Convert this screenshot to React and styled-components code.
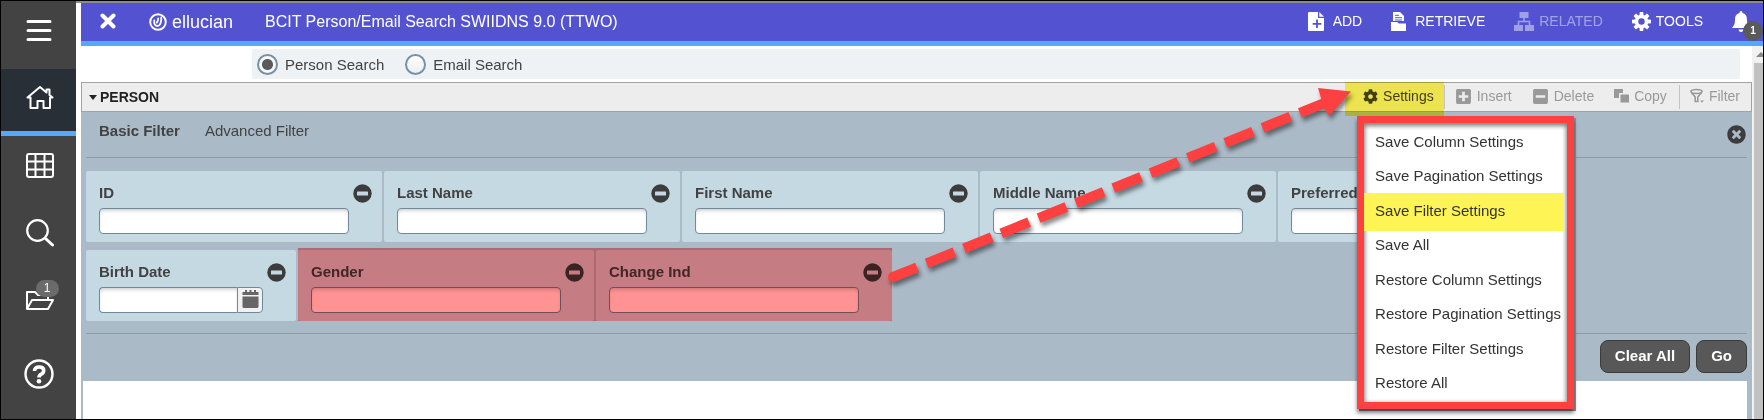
import React from "react";
import styled, { createGlobalStyle, css } from "styled-components";
import { FaCog, FaPlusSquare, FaMinusSquare, FaTimesCircle } from "react-icons/fa";

const GlobalStyle = createGlobalStyle`
  *, *::before, *::after { box-sizing: border-box; }
  body {
    margin: 0;
    background: #fff;
    font-family: "Liberation Sans", Arial, sans-serif;
    font-size: 15px;
    color: #424242;
  }
  button, input { font: inherit; color: inherit; }
  button { border: 0; padding: 0; background: none; cursor: pointer; }
  svg { display: block; flex: none; }
`;

const Frame = styled.div`
  display: flex;
  min-height: 100vh;
  border: 1px solid #000;
`;

/* ---------- side navigation ---------- */

const SideNav = styled.nav`
  display: flex;
  flex-direction: column;
  flex: none;
  width: 75px;
  background: #434343;
  color: #fff;
`;

const NavButton = styled.button`
  display: flex;
  justify-content: center;
  align-items: flex-start;
  height: 67px;
  padding-top: 16px;
  padding-right: 6px;
  padding-left: 8px;
  ${(p) =>
    p.$active &&
    css`
      background: #282f36;
      border-bottom: 5px solid #54a9ff;
    `}
  ${(p) => p.$first && css`height: 68px; padding-left: 6px;`}
  ${(p) => p.$last && css`margin-top: 6px; padding-left: 6px;`}
`;

const NavIcon = styled.span`
  position: relative;
  display: block;
`;

const NavBadge = styled.span`
  position: absolute;
  top: -6px;
  left: 10px;
  width: 23px;
  height: 17px;
  border-radius: 9px;
  background: #6b6b6b;
  font-size: 12px;
  line-height: 17px;
  text-align: center;
`;

/* ---------- header ---------- */

const Main = styled.main`
  flex: 1;
  min-width: 0;
  display: flex;
  flex-direction: column;
  border-top: 2px solid #8c8a8c;
`;

const Inset = styled.div`
  flex: 1;
  display: flex;
  flex-direction: column;
  margin-left: 5px;
`;

const Header = styled.header`
  display: flex;
  align-items: center;
  height: 43px;
  padding-left: 18px;
  border-bottom: 5px solid #54a9ff;
  background: #5353d1;
  color: #fff;
`;

const Logo = styled.div`
  display: flex;
  align-items: center;
  gap: 5px;
  width: 116px;
  margin-left: 32px;
  font-size: 18px;
`;

const Title = styled.h1`
  flex: 1;
  margin: 0;
  padding-bottom: 1px;
  font-size: 16px;
  font-weight: 400;
  white-space: nowrap;
`;

const HeaderActions = styled.div`
  display: flex;
  align-items: center;
  height: 38px;
`;

const HeaderButton = styled.button`
  display: flex;
  align-items: center;
  gap: ${(p) => p.$gap || 5}px;
  margin-right: 29px;
  padding-bottom: 2px;
  font-size: 14px;
  opacity: ${(p) => (p.disabled ? 0.45 : 1)};
`;

const BellButton = styled.button`
  position: relative;
  display: flex;
  align-items: flex-start;
  width: 31px;
  height: 38px;
  padding-top: 8px;
`;

const BellBadge = styled.span`
  position: absolute;
  right: 0;
  bottom: 0;
  width: 20px;
  height: 20px;
  border-radius: 10px;
  background: #5a5a5a;
  font-size: 10px;
  font-weight: 700;
  line-height: 20px;
  text-align: center;
`;

/* ---------- content ---------- */

const Body = styled.div`
  flex: 1;
  display: flex;
`;

const Content = styled.div`
  flex: 1;
  min-width: 0;
  display: flex;
  flex-direction: column;
`;

const SearchMode = styled.div`
  display: flex;
  align-items: center;
  gap: 21px;
  height: 30px;
  margin: 3px 12px 3px 171px;
  padding-left: 5px;
  background: #eff2f5;
`;

const RadioLabel = styled.label`
  display: flex;
  align-items: center;
  gap: 7px;
`;

const Radio = styled.input`
  appearance: none;
  width: 21px;
  height: 21px;
  margin: 0;
  border: 2px solid #7690a5;
  border-radius: 50%;
  background: linear-gradient(#fff, #eee);
  &:checked {
    background: radial-gradient(circle, #5a5a5a 5px, #f8f8f8 6px);
  }
`;

const Panel = styled.section`
  position: relative;
  flex: 1;
  display: flex;
  flex-direction: column;
  background: #abbac7;
`;

const PanelBar = styled.div`
  display: flex;
  align-items: center;
  height: 30px;
  border: 1px solid #a2a2a2;
  background: #ededed;
`;

const PanelTitle = styled.h2`
  flex: 1;
  display: flex;
  align-items: center;
  gap: 3px;
  margin: 0;
  padding-left: 7px;
  font-size: 14px;
  color: #222;
`;

const ToolSlot = styled.div`
  position: relative;
  display: flex;
  align-items: center;
  height: 28px;
  padding: 0 10px 0 18px;
  &::after {
    content: "";
    position: absolute;
    z-index: 1;
    inset: -1px 0 -5px 0;
    background: #fff455;
    mix-blend-mode: multiply;
    pointer-events: none;
  }
`;

const ToolButton = styled.button`
  display: flex;
  align-items: center;
  gap: 5px;
  margin-right: ${(p) => p.$after || 0}px;
  padding-bottom: 2px;
  font-size: 14px;
  color: ${(p) => (p.disabled ? "#999" : "#424242")};
`;

const Divider = styled.span`
  width: 1px;
  height: 24px;
  margin-right: 10px;
  background: #c4c4c4;
`;

const Menu = styled.ul`
  position: absolute;
  z-index: 3;
  top: 33px;
  left: 12px;
  display: flex;
  flex-direction: column;
  width: 217px;
  height: 293px;
  margin: 0;
  padding: 1px 3px 2px 0;
  list-style: none;
  border: 7px solid #ff4040;
  background: #fff;
  box-shadow: inset 0 2px 4px 1px rgba(0, 0, 0, 0.5), 0 4px 4px rgba(0, 0, 0, 0.5), 2px 2px 0 #8b9298;
`;

const MenuItem = styled.li`
  flex: 1;
  display: flex;
  ${(p) =>
    p.$marked &&
    css`
      background: #fff455;
      box-shadow: 0 3px 0 #fff455;
    `}
`;

const MenuButton = styled.button`
  flex: 1;
  padding-left: 11px;
  text-align: left;
  white-space: nowrap;
  color: #333;
`;

const Filter = styled.div`
  padding: 0 5px;
`;

const FilterTabs = styled.div`
  display: flex;
  align-items: center;
  gap: 25px;
  height: 46px;
  padding: 0 1px 8px 13px;
  border-bottom: 1px solid #8f9ba5;
`;

const FilterTab = styled.button`
  font-weight: ${(p) => (p.$active ? 700 : 400)};
`;

const CloseButton = styled.button`
  margin-left: auto;
  padding-top: 8px;
  color: #3c3c3c;
`;

const Fields = styled.div`
  display: flex;
  flex-wrap: wrap;
  gap: 8px 2px;
  padding: 13px 0 12px;
  border-bottom: 1px solid #8f9ba5;
`;

const MarkedFields = styled.div`
  position: relative;
  display: flex;
  gap: 2px;
  &::after {
    content: "";
    position: absolute;
    inset: -2px 0 0 0;
    background: #ff9292;
    mix-blend-mode: multiply;
    pointer-events: none;
  }
`;

const Card = styled.div`
  width: ${(p) => (p.$narrow ? 210 : 296)}px;
  height: 71px;
  padding: 11px 10px 0 13px;
  border-radius: 2px;
  background: #c5d9e3;
`;

const CardHead = styled.div`
  display: flex;
  justify-content: space-between;
  align-items: center;
  height: 26px;
  padding-bottom: 6px;
`;

const CardLabel = styled.label`
  font-weight: 700;
`;

const RemoveButton = styled.button`
  padding-top: 2px;
`;

const TextBox = styled.input`
  display: block;
  width: 250px;
  height: 26px;
  padding: 0 6px;
  border: 1px solid #71899d;
  border-radius: 4px;
  background: #fff;
  box-shadow: inset 0 3px 4px -2px rgba(0, 0, 0, 0.25);
`;

const DateBox = styled.div`
  display: flex;
  ${TextBox} {
    width: 138px;
    border-right: 0;
    border-radius: 4px 0 0 4px;
  }
`;

const CalendarButton = styled.button`
  display: flex;
  justify-content: center;
  align-items: flex-start;
  width: 26px;
  height: 26px;
  padding-top: 2px;
  border: 1px solid #71899d;
  border-radius: 0 4px 4px 0;
  background: #f1f1f1;
`;

const FilterActions = styled.div`
  display: flex;
  justify-content: flex-end;
  gap: 6px;
  padding: 6px 0 8px;
`;

const ActionButton = styled.button`
  height: 33px;
  padding: 0 14px 2px;
  border: 1px solid #3c3c3c;
  border-radius: 8px;
  background: #585858;
  color: #fff;
  font-weight: 700;
`;

const Results = styled.div`
  flex: 1;
  min-height: 38px;
  margin: 0 5px 0 2px;
  background: #fff;
`;

const ScrollTrack = styled.div`
  display: flex;
  flex-direction: column;
  align-items: flex-end;
  width: 11px;
  background: #f1f1f1;
`;

const ScrollThumb = styled.div`
  flex: 1;
  width: 9px;
  margin-top: 6px;
  background: #c1c1c1;
`;

const Arrow = styled.svg`
  position: absolute;
  z-index: 2;
  top: 0;
  left: 800px;
  overflow: visible;
  pointer-events: none;
  filter: drop-shadow(2px 4px 2px rgba(0, 0, 0, 0.45));
`;

/* ---------- drawings ---------- */

const MenuGlyph = () => (
  <svg width="26" height="24" viewBox="0 0 26 24" stroke="#fff" strokeWidth="3" strokeLinecap="round">
    <path d="M2 4.500H24M2 13.500H24M2 22.500H24" />
  </svg>
);

const HomeGlyph = () => (
  <svg width="28" height="26" viewBox="0 0 28 26" fill="none" stroke="#fff" strokeWidth="2" strokeLinejoin="round" strokeLinecap="round">
    <path d="M1.500 12.500L14 2L20.500 7.500V4.500H23.500V10L26.500 12.500H24V23H17.500V16H11.500V23H4.500V12.500Z" />
  </svg>
);

const GridGlyph = () => (
  <svg width="28" height="27" viewBox="0 0 28 27" fill="none" stroke="#fff" strokeWidth="2">
    <rect x="1" y="2" width="26" height="23" rx="2" />
    <path d="M9.500 2V25M18.500 2V25M1 9.500H27M1 17.500H27" />
  </svg>
);

const SearchGlyph = () => (
  <svg width="28" height="28" viewBox="0 0 28 28" fill="none" stroke="#fff" strokeLinecap="round">
    <circle cx="11.500" cy="11.500" r="10.300" strokeWidth="2.200" />
    <path d="M19.500 19.500L26.500 26" strokeWidth="3" />
  </svg>
);

const FolderGlyph = () => (
  <svg width="28" height="26" viewBox="0 0 28 26" fill="none" stroke="#fff" strokeWidth="2" strokeLinejoin="round">
    <path d="M1 23V6H9L12 9H22V14M1 23H22L27 14H6Z" />
  </svg>
);

const HelpGlyph = () => (
  <svg width="30" height="30" viewBox="0 0 30 30" fill="none" stroke="#fff">
    <circle cx="15" cy="15" r="13.500" strokeWidth="2.400" />
    <path d="M10.500 12Q10.500 8 15.200 8Q19.700 8 19.700 11.500Q19.700 14 17 15.300Q15 16.300 15 18.500" strokeWidth="3.600" />
    <circle cx="15" cy="22.300" r="2.300" fill="#fff" stroke="none" />
  </svg>
);

const CloseGlyph = () => (
  <svg width="18" height="18" viewBox="0 0 18 18" stroke="#fff" strokeWidth="4" strokeLinecap="round">
    <path d="M3.500 2.500L14.500 13.500M14.500 2.500L3.500 13.500" />
  </svg>
);

const LogoGlyph = () => (
  <svg width="18" height="18" viewBox="0 0 18 18" fill="none" stroke="#fff" strokeLinecap="round">
    <circle cx="9" cy="9" r="7.800" strokeWidth="1.900" />
    <path d="M5.300 7.500C4.800 10.500 6 13 8.300 13C11.300 13 12.500 8.500 12.300 4.500M9.200 5.500C9.200 7 8.800 8.500 7.800 9.500" strokeWidth="1.800" />
  </svg>
);

const AddGlyph = () => (
  <svg width="16" height="19" viewBox="0 0 16 19">
    <path d="M1 0H10V6H16V18Q16 19 15 19H1Q0 19 0 18V1Q0 0 1 0ZM11.300 0L16 4.700H11.300Z" fill="#fff" />
    <path d="M9 7.500V16M4.700 11.800H13.300" stroke="#5353d1" strokeWidth="1.800" />
  </svg>
);

const RetrieveGlyph = () => (
  <svg width="15" height="19" viewBox="0 0 15 19">
    <path d="M2 0H9L13 4V9H2Z" fill="#fff" />
    <path d="M4 3.300H8M4 5.700H11M4 8H11" stroke="#5353d1" strokeWidth="1" />
    <path d="M0 10H6L8 11.500H15V19H0Z" fill="#fff" />
  </svg>
);

const RelatedGlyph = () => (
  <svg width="20" height="19" viewBox="0 0 20 19" fill="#fff">
    <path d="M5.500 0H14.500V6H5.500ZM0 13H9V19H0ZM11 13H20V19H11Z" />
    <path d="M10 6V9.500M4.500 13V9.500H15.500V13" fill="none" stroke="#fff" strokeWidth="1.600" />
  </svg>
);

const ToolsGlyph = () => (
  <svg width="19" height="19" viewBox="-10 -10 20 20" fill="#fff">
    {[0, 45, 90, 135].map((a) => (
      <path key={a} d="M-1.800 -10H1.800L2.300 -5H-2.300ZM-1.800 10H1.800L2.300 5H-2.300Z" transform={`rotate(${a})`} />
    ))}
    <circle r="5.200" fill="none" stroke="#fff" strokeWidth="3.600" />
  </svg>
);

const BellGlyph = () => (
  <svg width="18" height="22" viewBox="0 0 18 22" fill="#fff">
    <path d="M9 0Q10.500 0 10.500 2C14 3 15 5.500 15 9C15 13.500 16.500 15 18 17H0C1.500 15 3 13.500 3 9C3 5.500 4 3 7.500 2Q7.500 0 9 0Z" />
    <path d="M6.500 18.500H11.500Q11 21 9 21Q7 21 6.500 18.500Z" />
  </svg>
);

const CaretGlyph = () => (
  <svg width="8" height="5" viewBox="0 0 8 5" fill="#222">
    <path d="M0 0H8L4 5Z" />
  </svg>
);

const CopyGlyph = () => (
  <svg width="15" height="14" viewBox="0 0 15 14" fill="#999">
    <path d="M0 0H9V4H5V9H0Z" />
    <rect x="6.500" y="5.500" width="8.500" height="8" />
  </svg>
);

const FunnelGlyph = () => (
  <svg width="14" height="16" viewBox="0 0 14 16" fill="none" stroke="#999">
    <ellipse cx="6.500" cy="3.500" rx="5.500" ry="2" strokeWidth="1.600" />
    <path d="M1.500 4.500L5.200 9V13.500H7.800V9L11.500 4.500" strokeWidth="1.600" />
    <path d="M10 12.500H14L12 14.800Z" fill="#999" stroke="none" />
  </svg>
);

const MinusGlyph = () => (
  <svg width="19" height="19" viewBox="0 0 19 19">
    <circle cx="9.500" cy="9.500" r="9.200" fill="#3c3c3c" />
    <rect x="4" y="7.500" width="11" height="4" rx="0.500" fill="#c5d9e3" />
  </svg>
);

const CalendarGlyph = () => (
  <svg width="17" height="18" viewBox="0 0 17 18" fill="#666">
    <path d="M0.500 2H3V0H5V2H7.500V0H9.500V2H12V0H14V2H16.500V5H0.500ZM0.500 6.500H16.500V16.500Q16.500 18 15 18H2Q0.500 18 0.500 16.500Z" />
  </svg>
);

const ScrollUpGlyph = () => (
  <svg width="9" height="11" viewBox="0 0 9 11" fill="#888">
    <path d="M2 11L7 6L9 8V11Z" />
  </svg>
);

/* ---------- composed parts ---------- */

function Field({ id, label, date }) {
  return (
    <Card $narrow={date}>
      <CardHead>
        <CardLabel htmlFor={id}>{label}</CardLabel>
        <RemoveButton type="button" aria-label={`Remove ${label}`}>
          <MinusGlyph />
        </RemoveButton>
      </CardHead>
      {date ? (
        <DateBox>
          <TextBox id={id} type="text" />
          <CalendarButton type="button" aria-label="Pick a date">
            <CalendarGlyph />
          </CalendarButton>
        </DateBox>
      ) : (
        <TextBox id={id} type="text" />
      )}
    </Card>
  );
}

const MENU = [
  "Save Column Settings",
  "Save Pagination Settings",
  "Save Filter Settings",
  "Save All",
  "Restore Column Settings",
  "Restore Pagination Settings",
  "Restore Filter Settings",
  "Restore All",
];

export default function App() {
  return (
    <>
      <GlobalStyle />
      <Frame>
        <SideNav>
          <NavButton $first aria-label="Menu"><MenuGlyph /></NavButton>
          <NavButton $active aria-label="Home"><HomeGlyph /></NavButton>
          <NavButton aria-label="Applications"><GridGlyph /></NavButton>
          <NavButton aria-label="Search"><SearchGlyph /></NavButton>
          <NavButton aria-label="Recently opened">
            <NavIcon>
              <FolderGlyph />
              <NavBadge>1</NavBadge>
            </NavIcon>
          </NavButton>
          <NavButton $last aria-label="Help"><HelpGlyph /></NavButton>
        </SideNav>

        <Main>
          <Inset>
            <Header>
              <button type="button" aria-label="Close"><CloseGlyph /></button>
              <Logo><LogoGlyph />ellucian</Logo>
              <Title>BCIT Person/Email Search SWIIDNS 9.0 (TTWO)</Title>
              <HeaderActions>
                <HeaderButton $gap={9}><AddGlyph />ADD</HeaderButton>
                <HeaderButton $gap={9}><RetrieveGlyph />RETRIEVE</HeaderButton>
                <HeaderButton disabled><RelatedGlyph />RELATED</HeaderButton>
                <HeaderButton><ToolsGlyph />TOOLS</HeaderButton>
                <BellButton aria-label="Notifications">
                  <BellGlyph />
                  <BellBadge>1</BellBadge>
                </BellButton>
              </HeaderActions>
            </Header>

            <Body>
              <Content>
                <SearchMode>
                  <RadioLabel><Radio type="radio" name="mode" defaultChecked />Person Search</RadioLabel>
                  <RadioLabel><Radio type="radio" name="mode" />Email Search</RadioLabel>
                </SearchMode>

                <Panel>
                  <PanelBar>
                    <PanelTitle><CaretGlyph />PERSON</PanelTitle>
                    <ToolSlot>
                      <ToolButton><FaCog size={15} />Settings</ToolButton>
                      <Menu>
                        {MENU.map((text) => (
                          <MenuItem key={text} $marked={text === "Save Filter Settings"}>
                            <MenuButton type="button">{text}</MenuButton>
                          </MenuItem>
                        ))}
                      </Menu>
                    </ToolSlot>
                    <Divider />
                    <ToolButton disabled $after={20}><FaPlusSquare size={17} />Insert</ToolButton>
                    <ToolButton disabled $after={20}><FaMinusSquare size={17} />Delete</ToolButton>
                    <ToolButton disabled $after={12}><CopyGlyph />Copy</ToolButton>
                    <Divider />
                    <ToolButton disabled $after={11}><FunnelGlyph />Filter</ToolButton>
                  </PanelBar>

                  <Filter>
                    <FilterTabs>
                      <FilterTab $active>Basic Filter</FilterTab>
                      <FilterTab>Advanced Filter</FilterTab>
                      <CloseButton aria-label="Close filter"><FaTimesCircle size={19} /></CloseButton>
                    </FilterTabs>
                    <Fields>
                      <Field id="id" label="ID" />
                      <Field id="last" label="Last Name" />
                      <Field id="first" label="First Name" />
                      <Field id="middle" label="Middle Name" />
                      <Field id="preferred" label="Preferred" />
                      <Field id="birth" label="Birth Date" date />
                      <MarkedFields>
                        <Field id="gender" label="Gender" />
                        <Field id="change" label="Change Ind" />
                      </MarkedFields>
                    </Fields>
                    <FilterActions>
                      <ActionButton type="button">Clear All</ActionButton>
                      <ActionButton type="button">Go</ActionButton>
                    </FilterActions>
                  </Filter>
                  <Results />

                  <Arrow width="480" height="210" viewBox="0 0 480 210" aria-hidden="true">
                    <circle cx="12" cy="195" r="5" fill="#ff4040" />
                    <path d="M12 195L448 19" stroke="#ff4040" strokeWidth="10" strokeDasharray="30 10.250" strokeDashoffset="4" />
                    <path d="M470 9.500L437 6L440 16L443 26L448 34Z" fill="#ff4040" />
                  </Arrow>
                </Panel>
              </Content>
              <ScrollTrack>
                <ScrollUpGlyph />
                <ScrollThumb />
              </ScrollTrack>
            </Body>
          </Inset>
        </Main>
      </Frame>
    </>
  );
}
